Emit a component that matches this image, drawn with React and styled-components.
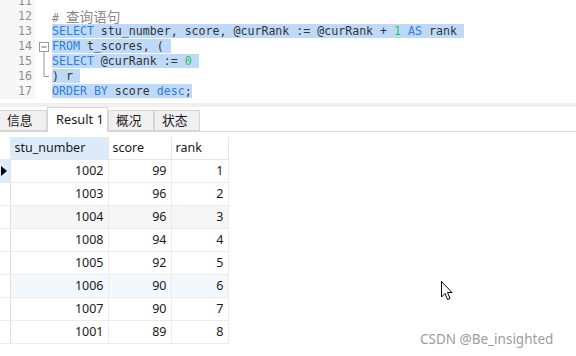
import React from 'react';
import styled, { createGlobalStyle } from 'styled-components';

const GlobalStyle = createGlobalStyle`
  html, body {
    margin: 0;
    padding: 0;
    background: #ffffff;
    overflow: hidden;
  }
`;

const Page = styled.div`
  position: relative;
  width: 576px;
  height: 356px;
  overflow: hidden;
  background: #ffffff;
  font-family: "Noto Sans", "Noto Sans CJK SC", sans-serif;
`;

const Editor = styled.div`
  display: flex;
  height: 101px;
  overflow: hidden;
  font-family: "DejaVu Sans Mono", "Noto Sans CJK SC", monospace;
  font-size: 11.6px;
`;

const Gutter = styled.div`
  width: 32px;
  padding-right: 3px;
  background: #f7f7f7;
  color: #8e8e8e;
  text-align: right;
  height: 99px;
`;

const FoldColumn = styled.div`
  width: 17px;
  flex: none;
`;

const Code = styled.div`
  flex: 1;
  color: #333333;
`;

const Lines = styled.div`
  margin-top: -6px;
`;

const Line = styled.div`
  height: 15px;
  line-height: 15px;
  white-space: pre;
`;

const Sel = styled.span`
  background: #bfdaf8;
`;

const Kw = styled.span`
  color: #2e7de1;
`;

const Num = styled.span`
  color: #27c45a;
`;

const Comment = styled.span`
  color: #8a8a8a;
`;

const Cjk = styled.span`
  font-family: "Noto Sans CJK SC", sans-serif;
  font-size: 13.6px;
`;

const Band = styled.div`
  height: 4px;
  margin-top: 2px;
  background: #f0f0f0;
`;

const TabRow = styled.div`
  display: flex;
  align-items: flex-end;
  height: 24px;
  border-bottom: 1px solid #d6d6d6;
`;

const Tab = styled.div`
  box-sizing: border-box;
  width: ${p => p.w}px;
  height: ${p => (p.active ? 25 : 21)}px;
  margin-bottom: ${p => (p.active ? -1 : 0)}px;
  padding-left: ${p => (p.active ? 8 : 7)}px;
  background: ${p => (p.active ? '#ffffff' : '#f0f0f0')};
  border: 1px solid #d6d6d6;
  border-bottom: ${p => (p.active ? 'none' : '1px solid #d6d6d6')};
  border-left: ${p => (p.first ? 'none' : '1px solid #d6d6d6')};
  font-size: 12.8px;
  line-height: ${p => (p.active ? 22 : 19)}px;
  color: #1a1a1a;
`;

const GridWrap = styled.div`
  padding-top: 5px;
`;

const Table = styled.table`
  border-collapse: collapse;
  table-layout: fixed;
  font-size: 12.5px;
  color: #1a1a1a;
`;

const Th = styled.th`
  box-sizing: border-box;
  width: ${p => p.w}px;
  height: 22px;
  padding: 0 4px;
  font-weight: normal;
  text-align: left;
  background: ${p => (p.current ? '#dcebfa' : '#ffffff')};
  border-right: 1px solid #e6e6e6;
  border-bottom: 1px solid #e6e6e6;
`;

const Row = styled.tr`
  background: ${p => p.bg || '#ffffff'};
`;

const Indicator = styled.td`
  box-sizing: border-box;
  height: 22px;
  padding: 0;
  background: ${p => (p.current ? '#dcebfa' : '#ffffff')};
  border-right: 1px solid #e0e0e0;
  border-bottom: 1px solid #ececec;
  vertical-align: middle;
`;

const Td = styled.td`
  height: 22px;
  padding: 0 4px 0 0;
  text-align: right;
  border-right: 1px solid #ececec;
  border-bottom: 1px solid #ececec;
`;

const Watermark = styled.div`
  position: absolute;
  left: 420px;
  top: 330px;
  font-family: "Noto Sans", sans-serif;
  font-size: 13.5px;
  color: #9c9c9c;
`;

const Pointer = styled.svg`
  position: absolute;
  left: 440px;
  top: 280px;
`;

const rows = [
  ['1002', '99', '1'],
  ['1003', '96', '2'],
  ['1004', '96', '3', '#f6f6f6'],
  ['1008', '94', '4'],
  ['1005', '92', '5'],
  ['1006', '90', '6', '#f3f8fd'],
  ['1007', '90', '7'],
  ['1001', '89', '8'],
];

export default function App() {
  return (
    <Page>
      <GlobalStyle />
      <Editor>
        <Gutter>
          <Lines>
            {[11, 12, 13, 14, 15, 16, 17].map(n => (
              <Line key={n}>{n}</Line>
            ))}
          </Lines>
        </Gutter>
        <FoldColumn>
          <svg width="17" height="101" viewBox="0 0 17 101">
            <rect x="4.5" y="42.5" width="9" height="9" fill="#fff" stroke="#9a9a9a" />
            <line x1="6.5" y1="47" x2="11.5" y2="47" stroke="#666" />
            <path d="M9 51.5 V76.5 H14" fill="none" stroke="#9a9a9a" />
          </svg>
        </FoldColumn>
        <Code>
          <Lines>
            <Line> </Line>
            <Line><Comment># <Cjk>查询语句</Cjk></Comment></Line>
            <Line>
              <Sel><Kw>SELECT</Kw> stu_number, score, @curRank := @curRank + <Num>1</Num> <Kw>AS</Kw> rank </Sel>
            </Line>
            <Line>
              <Sel><Kw>FROM</Kw> t_scores, ( </Sel>
            </Line>
            <Line>
              <Sel><Kw>SELECT</Kw> @curRank := <Num>0</Num> </Sel>
            </Line>
            <Line>
              <Sel>) r </Sel>
            </Line>
            <Line>
              <Sel><Kw>ORDER BY</Kw> score <Kw>desc</Kw>;</Sel>
            </Line>
          </Lines>
        </Code>
      </Editor>
      <Band />
      <TabRow>
        <Tab w={47} first>信息</Tab>
        <Tab w={61} active>Result 1</Tab>
        <Tab w={46}>概况</Tab>
        <Tab w={46}>状态</Tab>
      </TabRow>
      <GridWrap>
        <Table>
          <thead>
            <tr>
              <Th w={10} />
              <Th w={98} current>stu_number</Th>
              <Th w={63}>score</Th>
              <Th w={57}>rank</Th>
            </tr>
          </thead>
          <tbody>
            {rows.map(([id, score, rank, bg], i) => (
              <Row key={id} bg={bg}>
                <Indicator current={i === 0}>
                  {i === 0 && (
                    <svg width="9" height="12" viewBox="0 0 9 12" style={{ display: 'block' }}>
                      <path d="M1 1 L7 6 L1 11 Z" fill="#000" />
                    </svg>
                  )}
                </Indicator>
                <Td>{id}</Td>
                <Td>{score}</Td>
                <Td>{rank}</Td>
              </Row>
            ))}
          </tbody>
        </Table>
      </GridWrap>
      <Pointer width="14" height="22" viewBox="0 0 14 22">
        <path d="M1.5 1.5 V17 L5 13.5 L7.5 19.5 L10 18.5 L7.5 12.5 H12 Z" fill="#fff" stroke="#000" strokeWidth="1" strokeLinejoin="miter" />
      </Pointer>
      <Watermark>CSDN @Be_insighted</Watermark>
    </Page>
  );
}
